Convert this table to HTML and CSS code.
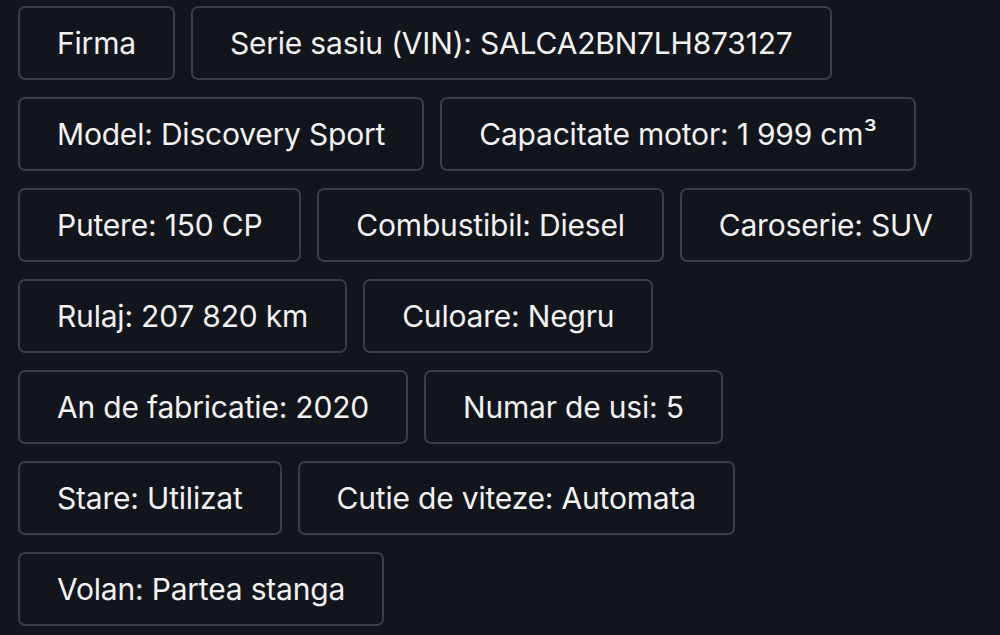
FILE: index.html
```html
<!DOCTYPE html>
<html>
<head>
<meta charset="utf-8">
<link rel="stylesheet" href="styles.css">
</head>
<body>
<div class="chips">
  <div class="chip">Firma</div>
  <div class="chip">Serie sasiu (VIN): SALCA2BN7LH873127</div>
  <div class="chip">Model: Discovery Sport</div>
  <div class="chip">Capacitate motor: 1 999 cm³</div>
  <div class="chip">Putere: 150 CP</div>
  <div class="chip">Combustibil: Diesel</div>
  <div class="chip">Caroserie: SUV</div>
  <div class="chip">Rulaj: 207 820 km</div>
  <div class="chip">Culoare: Negru</div>
  <div class="chip">An de fabricatie: 2020</div>
  <div class="chip">Numar de usi: 5</div>
  <div class="chip">Stare: Utilizat</div>
  <div class="chip">Cutie de viteze: Automata</div>
  <div class="chip">Volan: Partea stanga</div>
</div>
</body>
</html>
```

FILE: styles.css
```css
html, body {
  margin: 0;
  padding: 0;
  background: #13151c;
  height: 100%;
  overflow: hidden;
}
.chips {
  display: flex;
  flex-wrap: wrap;
  gap: 17px 16px;
  padding: 6px 0 0 18px;
  width: 975px;
}
.chip {
  box-sizing: border-box;
  height: 74px;
  display: flex;
  align-items: center;
  padding: 0 37px 1px;
  border: 2px solid #3a3d45;
  border-radius: 7px;
  color: #f2f2f4;
  font-family: "Inter", "Noto Sans", sans-serif;
  font-size: 30px;
  letter-spacing: -0.2px;
  white-space: nowrap;
}
```
